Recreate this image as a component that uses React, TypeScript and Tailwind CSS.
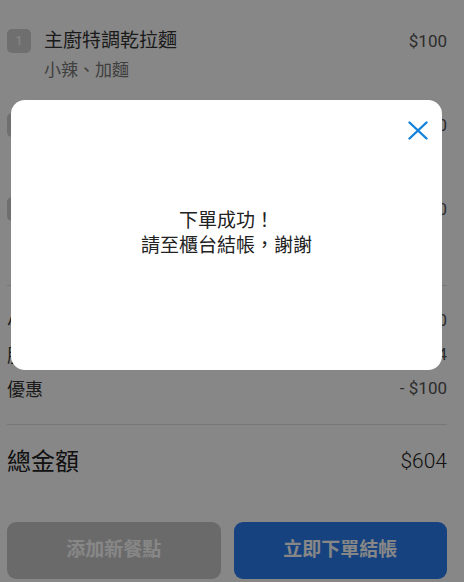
import React from 'react';

const font = { fontFamily: 'Roboto, "Noto Sans CJK TC", sans-serif' };

const items = [
  { no: 1, name: "主廚特調乾拉麵", note: "小辣、加麵", price: 100 },
  { no: 2, name: "日式豚骨拉麵", note: "不要蔥", price: 300 },
  { no: 3, name: "黃金炸雞塊", note: "胡椒鹽", price: 240 },
];

const summary = [
  { label: "小計", value: "$640" },
  { label: "服務費", value: "$64" },
  { label: "優惠", value: "- $100" },
];

const App = () => {
  return (
    <div className="relative h-[582px] w-[464px] overflow-hidden bg-white" style={font}>
      <div className="flex h-full flex-col pl-[7px] pr-[17px] pt-[29px]">
        <div className="flex flex-col gap-[32px]">
          {items.map((item) => (
            <div key={item.no} className="flex items-start">
              <div className="flex h-[24px] w-[24px] shrink-0 items-center justify-center rounded-[5px] bg-[#d2d2d2] text-[13px] text-white">
                {item.no}
              </div>
              <div className="ml-[13px] flex-1">
                <div className="text-[19px] leading-[24px] text-[#333]">{item.name}</div>
                <div className="mt-[6px] text-[17px] leading-[22px] text-[#777]">{item.note}</div>
              </div>
              <div className="text-[17px] leading-[24px] text-[#555]">${item.price}</div>
            </div>
          ))}
        </div>

        <div className="mt-[36px] h-px bg-[#e0e0e0]" />

        <div className="flex flex-col gap-[8px] py-[22px]">
          {summary.map((row) => (
            <div key={row.label} className="flex h-[26px] items-center justify-between">
              <span className="text-[18px] text-[#333]">{row.label}</span>
              <span className="text-[17px] text-[#555]">{row.value}</span>
            </div>
          ))}
        </div>

        <div className="h-px bg-[#e0e0e0]" />

        <div className="mt-[21px] flex h-[32px] items-center justify-between">
          <span className="text-[24px] text-[#222]">總金額</span>
          <span className="text-[21px] font-light text-[#222]">$604</span>
        </div>

        <div className="mt-[44px] grid grid-cols-2 gap-[13px]">
          <button className="h-[57px] rounded-[9px] bg-[#c9c8cb] text-[19px] font-bold text-white">添加新餐點</button>
          <button className="h-[57px] rounded-[9px] bg-[#2a7ef0] text-[19px] font-bold text-white">立即下單結帳</button>
        </div>
      </div>

      {/* dimmed backdrop + success dialog */}
      <div className="absolute inset-0 bg-[rgba(0,0,0,0.47)]">
        <div className="absolute left-[11px] top-[100px] flex h-[270px] w-[431px] flex-col items-center justify-center rounded-[14px] bg-white">
          <button className="absolute right-[14px] top-[21px] p-0">
            <svg width="20" height="19" viewBox="0 0 20 19" fill="none">
              <path d="M1.5 1.5 L18.5 17.5 M18.5 1.5 L1.5 17.5" stroke="#1282dc" strokeWidth="2.4" strokeLinecap="round" />
            </svg>
          </button>
          <div className="mt-[-4px] text-center text-[19px] leading-[25px] text-[#222]">
            <div>下單成功！</div>
            <div>請至櫃台結帳，謝謝</div>
          </div>
        </div>
      </div>
    </div>
  );
};

export default App;
